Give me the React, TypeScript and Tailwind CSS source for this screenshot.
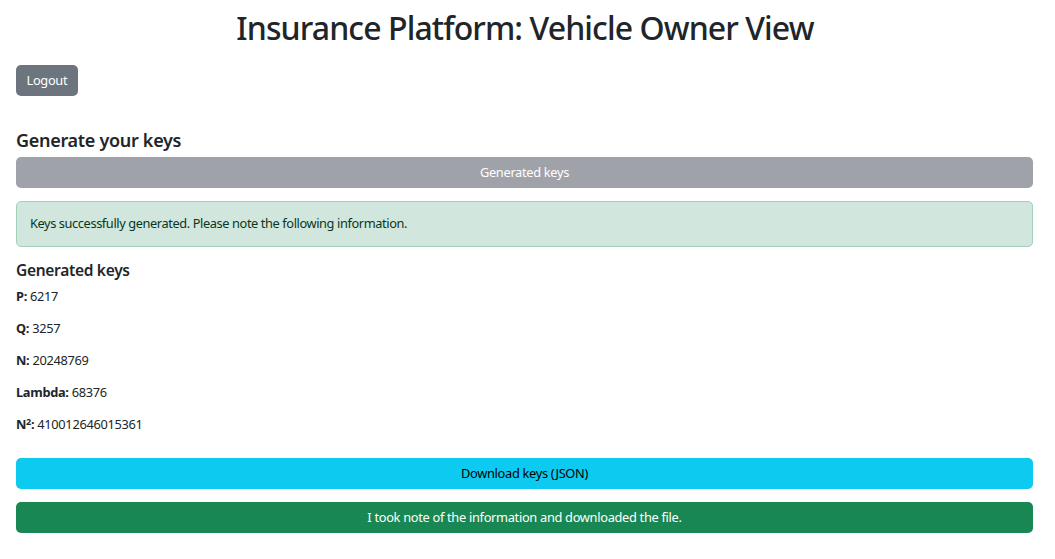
import React from "react";

export default function App() {
  const font = { fontFamily: '"Noto Sans", "Open Sans", sans-serif' };
  return (
    <div className="min-h-[559px] bg-white text-[#212529] pl-4 pr-[22px]" style={font}>
      <h1 className="text-center text-[32px] leading-[38px] font-medium pt-[9px] tracking-[-0.9px] pl-[1px]">
        Insurance Platform: Vehicle Owner View
      </h1>
      <div className="mt-[18px]">
        <button className="h-[31px] px-[10.5px] rounded-[5px] bg-[#6c757d] text-white text-[12.8px] tracking-[-0.3px]">
          Logout
        </button>
      </div>
      <h4 className="mt-[32px] text-[18px] leading-[24px] font-semibold tracking-[-0.3px]">Generate your keys</h4>
      <button className="mt-[5px] w-full h-[31px] rounded-[5px] bg-[#9fa3a9] text-white text-[12.8px] tracking-[-0.3px]">
        Generated keys
      </button>
      <div className="mt-[13px] h-[46px] flex items-center px-[13px] rounded-[5px] border border-[#a3cfbb] bg-[#d1e7dd] text-[#0a3622] text-[12.8px] tracking-[-0.4px]">
        Keys successfully generated. Please note the following information.
      </div>
      <h5 className="mt-[12px] text-[15.5px] leading-[22px] font-semibold tracking-[-0.3px]">Generated keys</h5>
      <div className="text-[12.8px] tracking-[-0.3px]">
        <p className="leading-[19px] mt-[6px]"><b>P:</b> 6217</p>
        <p className="leading-[19px] mt-[13px]"><b>Q:</b> 3257</p>
        <p className="leading-[19px] mt-[13px]"><b>N:</b> 20248769</p>
        <p className="leading-[19px] mt-[13px]"><b>Lambda:</b> 68376</p>
        <p className="leading-[19px] mt-[13px]"><b>N<sup className="text-[9px]">2</sup>:</b> 410012646015361</p>
      </div>
      <button className="mt-[24px] w-full h-[31px] rounded-[5px] bg-[#0dcaf0] text-black text-[12.8px] tracking-[-0.3px]">
        Download keys (JSON)
      </button>
      <button className="mt-[13px] w-full h-[31px] rounded-[5px] bg-[#198754] text-white text-[12.8px] tracking-[-0.3px]">
        I took note of the information and downloaded the file.
      </button>
    </div>
  );
}
